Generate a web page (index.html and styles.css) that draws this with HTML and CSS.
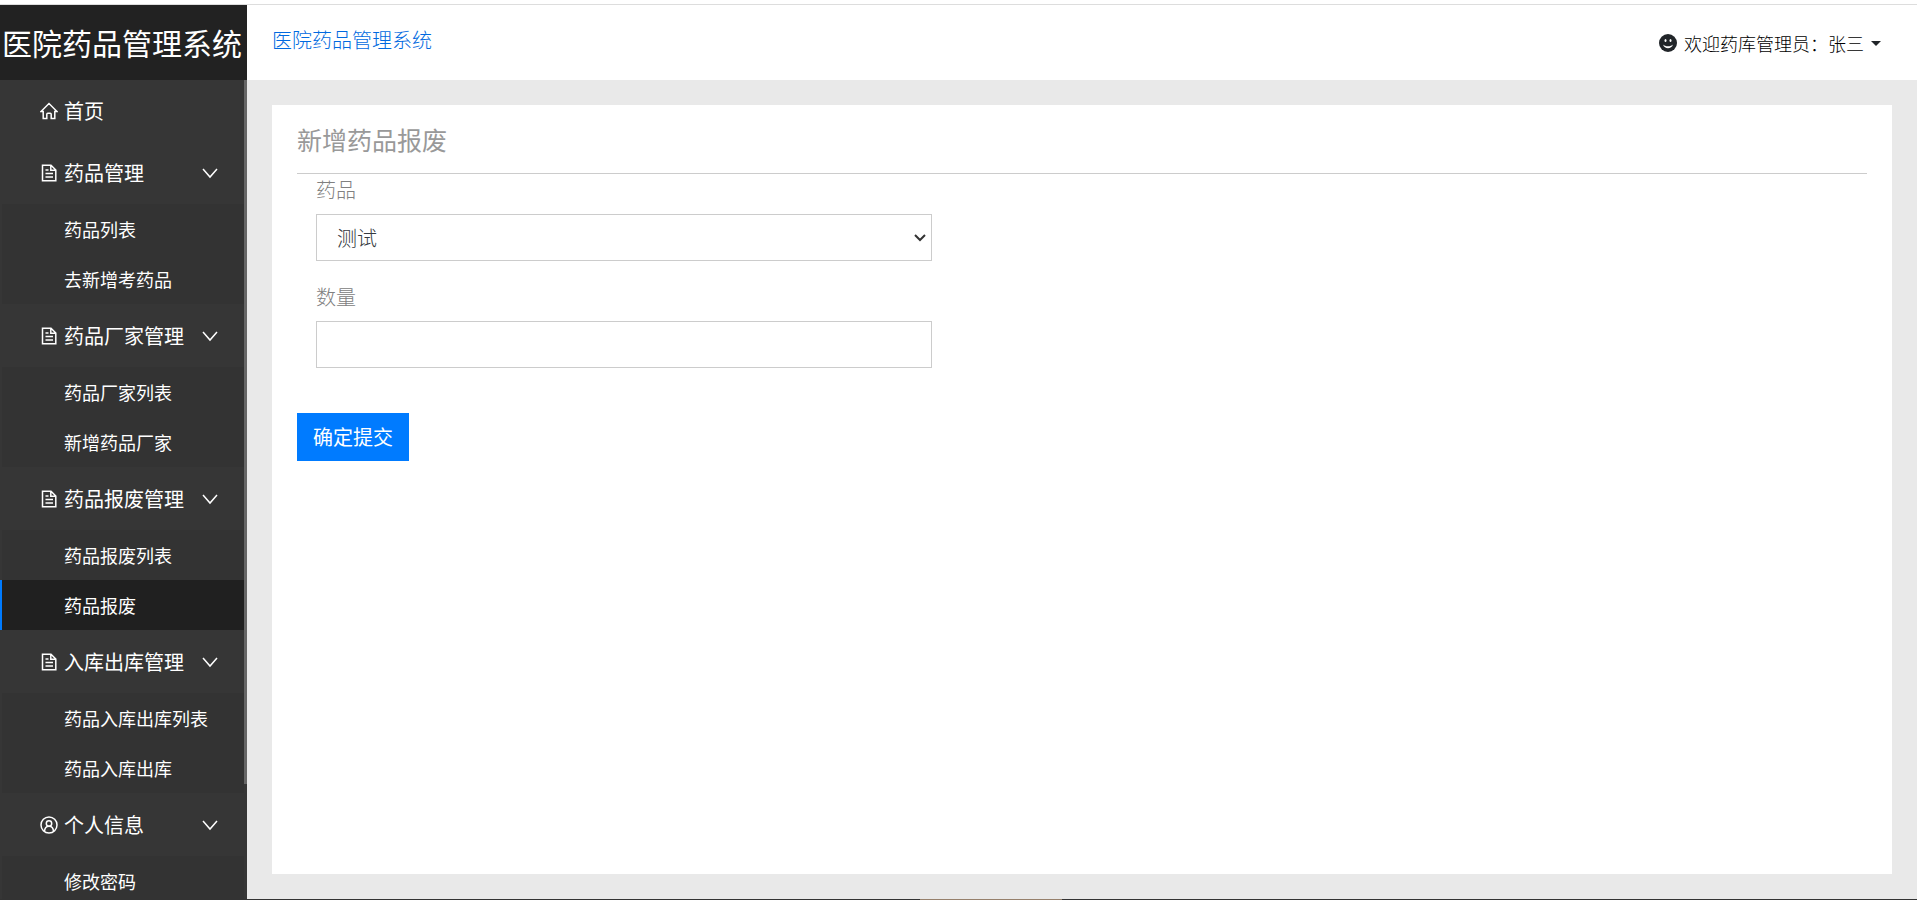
FILE: index.html
```html
<!DOCTYPE html>
<html lang="zh-CN">
<head>
    <meta charset="UTF-8">
    <meta name="viewport" content="width=device-width, initial-scale=1.0">
    <title>医院药品管理系统</title>
    <link rel="stylesheet" href="styles.css">
</head>
<body>
    <!-- 图标 -->
    <svg class="sprite" aria-hidden="true">
        <symbol id="icon-home" viewBox="0 0 18 18">
            <path d="M1 9.5 9 1.5l8 8h-2.2v7h-3.6v-4.3a1 1 0 0 0-1-1H7.800a1 1 0 0 0-1 1v4.300H3.200v-7z"/>
        </symbol>
        <symbol id="icon-file" viewBox="0 0 18 18">
            <path d="M2.500 1.300h8.500l4.800 4.700v10.700H2.500zM10.800 1.500v4.700h4.800M5.500 6h3M5.500 9.500h7.500M5.500 13h7.500"/>
        </symbol>
        <symbol id="icon-user" viewBox="0 0 18 18">
            <circle cx="9" cy="9" r="8"/>
            <circle cx="9" cy="7.500" r="2.700"/>
            <path d="M4.500 15.200c.2-3 2-5 4.500-5s4.300 2 4.500 5"/>
        </symbol>
        <symbol id="icon-down" viewBox="0 0 18 18">
            <path d="M2 5l7 8 7-8"/>
        </symbol>
    </svg>

    <div class="page">
        <header class="header">
            <a class="logo" href="#">医院药品管理系统</a>
            <div class="navbar">
                <a class="navbar-title" href="#">医院药品管理系统</a>
                <button class="user" type="button">
                    <svg class="user-icon" viewBox="0 0 18 18" aria-hidden="true">
                        <circle cx="9" cy="9" r="9" fill="#212529"/>
                        <ellipse cx="6.500" cy="6.500" rx="1" ry="1.600" fill="#fff"/>
                        <ellipse cx="11.500" cy="6.500" rx="1" ry="1.600" fill="#fff"/>
                        <path d="M4 10.500c1.500 5 8.500 5 10 0-2 2.400-8 2.400-10 0z" fill="#fff"/>
                    </svg>
                    <span>欢迎药库管理员：张三</span>
                    <span class="caret"></span>
                </button>
            </div>
        </header>

        <div class="main">
            <nav class="sidebar">
                <ul class="menu">
                    <li>
                        <a class="menu-link" href="#"><svg class="icon"><use href="#icon-home"/></svg>首页</a>
                    </li>
                    <li class="menu-group">
                        <a class="menu-link" href="#"><svg class="icon"><use href="#icon-file"/></svg>药品管理<svg class="icon arrow"><use href="#icon-down"/></svg></a>
                        <ul class="submenu">
                            <li><a class="submenu-link" href="#">药品列表</a></li>
                            <li><a class="submenu-link" href="#">去新增考药品</a></li>
                        </ul>
                    </li>
                    <li class="menu-group">
                        <a class="menu-link" href="#"><svg class="icon"><use href="#icon-file"/></svg>药品厂家管理<svg class="icon arrow"><use href="#icon-down"/></svg></a>
                        <ul class="submenu">
                            <li><a class="submenu-link" href="#">药品厂家列表</a></li>
                            <li><a class="submenu-link" href="#">新增药品厂家</a></li>
                        </ul>
                    </li>
                    <li class="menu-group">
                        <a class="menu-link" href="#"><svg class="icon"><use href="#icon-file"/></svg>药品报废管理<svg class="icon arrow"><use href="#icon-down"/></svg></a>
                        <ul class="submenu">
                            <li><a class="submenu-link" href="#">药品报废列表</a></li>
                            <li><a class="submenu-link active" href="#">药品报废</a></li>
                        </ul>
                    </li>
                    <li class="menu-group">
                        <a class="menu-link" href="#"><svg class="icon"><use href="#icon-file"/></svg>入库出库管理<svg class="icon arrow"><use href="#icon-down"/></svg></a>
                        <ul class="submenu">
                            <li><a class="submenu-link" href="#">药品入库出库列表</a></li>
                            <li><a class="submenu-link" href="#">药品入库出库</a></li>
                        </ul>
                    </li>
                    <li class="menu-group">
                        <a class="menu-link" href="#"><svg class="icon"><use href="#icon-user"/></svg>个人信息<svg class="icon arrow"><use href="#icon-down"/></svg></a>
                        <ul class="submenu">
                            <li><a class="submenu-link" href="#">修改密码</a></li>
                        </ul>
                    </li>
                </ul>
                <div class="scroll-thumb"></div>
            </nav>

            <main class="content">
                <section class="card">
                    <h1 class="card-title">新增药品报废</h1>
                    <form>
                        <div class="form-group">
                            <label for="drug">药品</label>
                            <div class="select-box">
                                <select class="form-control" id="drug">
                                    <option>测试</option>
                                </select>
                                <svg class="select-arrow" viewBox="0 0 12 12" aria-hidden="true"><path d="M1 3l5 5 5-5"/></svg>
                            </div>
                        </div>
                        <div class="form-group">
                            <label for="amount">数量</label>
                            <input class="form-control" id="amount" type="text">
                        </div>
                        <button class="btn" type="submit">确定提交</button>
                    </form>
                </section>
            </main>
        </div>
        <div class="bottom-line"></div>
    </div>
</body>
</html>
```
FILE: styles.css
```css
* {
    box-sizing: border-box;
}
body {
    margin: 0;
    background: #fff;
    color: #212529;
    font-family: "Noto Sans CJK SC", sans-serif;
    font-size: 20px;
    font-weight: 300;
    line-height: 30px;
}
a {
    color: inherit;
    text-decoration: none;
}
ul {
    margin: 0;
    padding: 0;
    list-style: none;
}
.sprite {
    display: none;
}
.page {
    display: flex;
    flex-direction: column;
    height: 100vh;
    padding-top: 4px;
    overflow: hidden;
}

/* 顶部 */
.header {
    display: flex;
    flex: none;
    height: 76px;
    border-top: 1px solid #ddd;
}
.logo {
    width: 247px;
    padding-left: 2px;
    background: #222;
    color: #fff;
    font-size: 30px;
    font-weight: 400;
    line-height: 74px;
    white-space: nowrap;
}
.navbar {
    display: flex;
    flex: 1;
    align-items: flex-start;
    justify-content: space-between;
    padding: 20px 36px 0 25px;
}
.navbar-title {
    color: #0069e0;
}
.user {
    display: flex;
    align-items: center;
    gap: 7px;
    padding: 3px 0;
    border: 0;
    background: none;
    color: #000;
    font: inherit;
    font-size: 18px;
    line-height: 30px;
}
.user-icon {
    width: 18px;
    height: 18px;
}
.caret {
    border-top: 5px solid #212529;
    border-right: 5px solid transparent;
    border-left: 5px solid transparent;
}

/* 左侧菜单 */
.main {
    display: flex;
    flex: 1;
    min-height: 0;
}
.sidebar {
    position: relative;
    flex: none;
    width: 247px;
    padding-right: 3px;
    overflow: hidden;
    background: #363636;
    color: #fff;
    font-weight: 400;
}
.menu-group {
    border-bottom: 1px solid #363636;
}
.menu-link {
    display: flex;
    align-items: center;
    gap: 6px;
    padding: 16px 25px 16px 40px;
}
.icon {
    flex: none;
    width: 18px;
    height: 18px;
    fill: none;
    stroke: #fff;
    stroke-width: 1.5;
}
.arrow {
    margin-left: auto;
}
.submenu {
    background: #333;
}
.submenu-link {
    display: block;
    padding: 10px 0 10px 62px;
    border-left: 2px solid #363636;
    font-size: 18px;
}
.submenu-link.active {
    border-left-color: #007bff;
    background: #202020;
}
.scroll-thumb {
    position: absolute;
    top: 0;
    right: 0;
    width: 3px;
    height: 86%;
    background: #666;
}

/* 内容 */
.content {
    display: flex;
    flex: 1;
    padding: 25px;
    background: #e9e9e9;
}
.card {
    flex: 1;
    padding: 19px 25px;
    background: #fff;
}
.card-title {
    margin: 0;
    padding-bottom: 18px;
    border-bottom: 1px solid #ccc;
    color: #999;
    font-size: 25px;
    font-weight: 400;
    line-height: 31px;
}
.form-group {
    width: calc(100% * 5 / 12);
    margin-bottom: 20px;
    padding: 0 19px;
}
.form-group label {
    display: block;
    padding-top: 1px;
    margin-bottom: 9px;
    color: #808080;
}
.select-box {
    position: relative;
}
.form-control {
    display: block;
    width: 100%;
    height: 47px;
    padding: 0 20px;
    border: 1px solid #ccc;
    border-radius: 0;
    background: #fff;
    color: #343a40;
    font: inherit;
    appearance: none;
}
.select-arrow {
    position: absolute;
    top: 18px;
    right: 6px;
    width: 12px;
    height: 12px;
    fill: none;
    stroke: #333;
    stroke-width: 2;
    pointer-events: none;
}
.btn {
    display: block;
    margin-top: 45px;
    padding: 8px 15px;
    border: 1px solid #007bff;
    background: #007bff;
    color: #fff;
    font: inherit;
    font-weight: 400;
    line-height: 30px;
}
.bottom-line {
    flex: none;
    height: 1px;
    background: linear-gradient(to right, #333 48%, #96806c 48%, #96806c 55.4%, #333 55.4%);
}
```
